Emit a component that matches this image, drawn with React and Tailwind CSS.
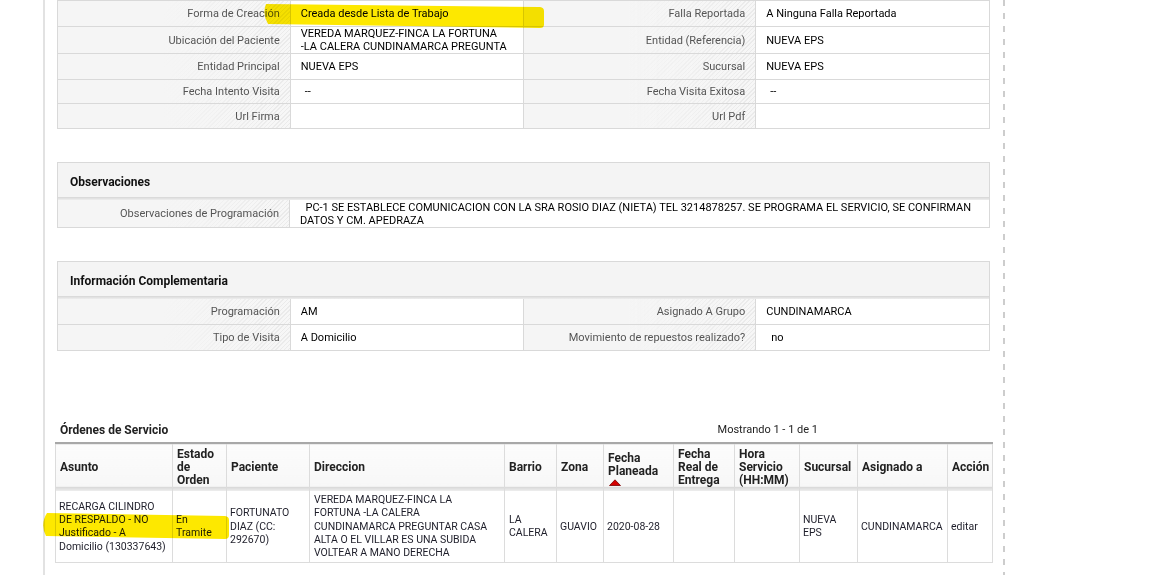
import React from "react";

const labelBg =
  "[background-image:linear-gradient(90deg,#f5f5f5_45%,rgba(245,245,245,0.15)),repeating-linear-gradient(135deg,#e8e8e8_0px,#e8e8e8_1px,#f7f7f7_1px,#f7f7f7_3px)]";

function Label({ children, className = "" }) {
  return (
    <div
      className={`flex items-center justify-end pr-[10px] text-[11px] leading-[13px] text-[#555] bg-[#f5f5f5] ${labelBg} border-r border-[#d9d9d9] ${className}`}
    >
      <span className="text-right">{children}</span>
    </div>
  );
}

function Value({ children, className = "", last = false }) {
  return (
    <div
      className={`flex items-center pl-[10px] pr-[6px] text-[11px] leading-[13px] text-[#000] bg-white ${
        last ? "" : "border-r border-[#d9d9d9]"
      } ${className}`}
    >
      <div>{children}</div>
    </div>
  );
}

function SectionHeader({ title }) {
  return (
    <div>
      <div className="h-[34px] bg-[#f4f4f4] flex items-center pt-[3px] pl-[12px] text-[12px] font-bold text-[#111]">
        {title}
      </div>
      <div className="h-[3px] bg-gradient-to-b from-[#d6d6d6] to-[#eeeeee]" />
    </div>
  );
}

function TopTable() {
  const rows = [
    {
      h: "min-h-[25px]",
      c: [
        "Forma de Creación",
        "Creada desde Lista de Trabajo",
        "Falla Reportada",
        "A Ninguna Falla Reportada",
      ],
    },
    {
      h: "min-h-[25px]",
      c: [
        "Ubicación del Paciente",
        <span className="block whitespace-nowrap overflow-hidden">
          VEREDA MARQUEZ-FINCA LA FORTUNA
          <br />
          -LA CALERA CUNDINAMARCA PREGUNTA
        </span>,
        "Entidad (Referencia)",
        "NUEVA EPS",
      ],
    },
    { h: "min-h-[25px]", c: ["Entidad Principal", "NUEVA EPS", "Sucursal", "NUEVA EPS"] },
    {
      h: "min-h-[23px]",
      c: ["Fecha Intento Visita", "--", "Fecha Visita Exitosa", "--"],
      pad: true,
    },
    { h: "min-h-[24px]", c: ["Url Firma", "", "Url Pdf", ""] },
  ];
  return (
    <div className="border-x border-b border-[#d9d9d9]">
      <div className="grid grid-cols-4 h-[1px] border-b border-[#d9d9d9]">
        <div className={`bg-[#f5f5f5] border-r border-[#d9d9d9]`} />
        <div className="bg-white border-r border-[#d9d9d9]" />
        <div className={`bg-[#f5f5f5] border-r border-[#d9d9d9]`} />
        <div className="bg-white" />
      </div>
      {rows.map((r, i) => (
        <div
          key={i}
          className={`grid grid-cols-4 ${i < rows.length - 1 ? "border-b border-[#d9d9d9]" : ""}`}
        >
          <Label className={r.h}>{r.c[0]}</Label>
          <Value className={`${r.h} ${r.pad ? "pl-[14px]" : ""}`}>{r.c[1]}</Value>
          <Label className={r.h}>{r.c[2]}</Label>
          <Value className={`${r.h} ${r.pad ? "pl-[14px]" : ""}`} last>
            {r.c[3]}
          </Value>
        </div>
      ))}
    </div>
  );
}

function ObsBox() {
  return (
    <div className="mt-[33px] border border-[#d9d9d9]">
      <SectionHeader title="Observaciones" />
      <div className="grid grid-cols-[232px_1fr]">
        <Label className="min-h-[27px]">Observaciones de Programación</Label>
        <Value className="min-h-[27px] pr-[14px]" last>
          {"\u00a0\u00a0PC-1 SE ESTABLECE COMUNICACION CON LA SRA ROSIO DIAZ (NIETA) TEL 3214878257. SE PROGRAMA EL SERVICIO, SE CONFIRMAN DATOS Y CM. APEDRAZA"}
        </Value>
      </div>
    </div>
  );
}

function InfoBox() {
  return (
    <div className="mt-[33px] border border-[#d9d9d9]">
      <SectionHeader title="Información Complementaria" />
      <div className="grid grid-cols-4 border-b border-[#d9d9d9]">
        <Label className="min-h-[25px]">Programación</Label>
        <Value className="min-h-[25px]">AM</Value>
        <Label className="min-h-[25px]">Asignado A Grupo</Label>
        <Value className="min-h-[25px]" last>
          CUNDINAMARCA
        </Value>
      </div>
      <div className="grid grid-cols-4">
        <Label className="min-h-[25px]">Tipo de Visita</Label>
        <Value className="min-h-[25px]">A Domicilio</Value>
        <Label className="min-h-[25px]">Movimiento de repuestos realizado?</Label>
        <Value className="min-h-[25px] pl-[15px]" last>
          no
        </Value>
      </div>
    </div>
  );
}

const thBg =
  "bg-[linear-gradient(to_bottom,#fcfcfc_0%,#f7f7f7_90%,#d8d8d8_92%,#eeeeee_100%)]";

function Th({ children }) {
  return (
    <th
      className={`h-[48px] align-middle text-left pl-[4px] pr-[2px] text-[12px] leading-[13px] font-bold text-[#222] border-x border-[#dcdcdc] ${thBg}`}
    >
      {children}
    </th>
  );
}

function Td({ children, className = "" }) {
  return (
    <td
      className={`h-[71px] align-middle text-left pl-[3px] pr-[4px] text-[10.5px] leading-[13.3px] text-[#1e1e2a] border-x border-b border-[#dcdcdc] ${className}`}
    >
      {children}
    </td>
  );
}

function Orders() {
  const widths = [
    "w-[117px]",
    "w-[54px]",
    "w-[83px]",
    "w-[195px]",
    "w-[52px]",
    "w-[47px]",
    "w-[70px]",
    "w-[61px]",
    "w-[65px]",
    "w-[58px]",
    "w-[90px]",
    "w-[45px]",
  ];
  return (
    <div className="-mx-[2px]">
      <div className="mt-[72px] flex items-center h-[14px]">
        <div className="flex-1 pl-[5px] text-[12px] font-bold text-[#222] leading-[14px]">
          Órdenes de Servicio
        </div>
        <div className="mr-[174px] text-[11px] text-[#222] leading-[14px]">
          Mostrando 1 - 1 de 1
        </div>
      </div>
      <table className="mt-[5px] table-fixed border-collapse w-[937px] border-t-2 border-[#a8a8a8]">
        <colgroup>
          {widths.map((w, i) => (
            <col key={i} className={w} />
          ))}
        </colgroup>
        <thead>
          <tr>
            <Th>Asunto</Th>
            <Th>
              Estado
              <br />
              de
              <br />
              Orden
            </Th>
            <Th>Paciente</Th>
            <Th>Direccion</Th>
            <Th>Barrio</Th>
            <Th>Zona</Th>
            <Th>
              <div className="pt-[2px]">
                Fecha
                <br />
                Planeada
                <svg width="12" height="7" viewBox="0 0 12 7" className="block mt-[1px] ml-[1px]">
                  <polygon points="0.5,6.5 6,0.8 11.5,6.5" fill="#d40000" stroke="#7a0000" strokeWidth="0.8" />
                </svg>
              </div>
            </Th>
            <Th>
              Fecha
              <br />
              Real de
              <br />
              Entrega
            </Th>
            <Th>
              Hora
              <br />
              Servicio
              <br />
              (HH:MM)
            </Th>
            <Th>Sucursal</Th>
            <Th>Asignado a</Th>
            <Th>Acción</Th>
          </tr>
        </thead>
        <tbody>
          <tr>
            <Td>RECARGA CILINDRO DE RESPALDO - NO Justificado - A Domicilio (130337643)</Td>
            <Td>En Tramite</Td>
            <Td>FORTUNATO DIAZ (CC: 292670)</Td>
            <Td className="pl-[4px] pr-[6px]">
              VEREDA MARQUEZ-FINCA LA FORTUNA -LA CALERA CUNDINAMARCA PREGUNTAR CASA ALTA O EL
              VILLAR ES UNA SUBIDA VOLTEAR A MANO DERECHA
            </Td>
            <Td className="pl-[4px]">LA CALERA</Td>
            <Td className="pr-0">GUAVIO</Td>
            <Td>2020-08-28</Td>
            <Td></Td>
            <Td></Td>
            <Td>NUEVA EPS</Td>
            <Td className="pr-0 whitespace-nowrap">CUNDINAMARCA</Td>
            <Td>editar</Td>
          </tr>
        </tbody>
      </table>
    </div>
  );
}

export default function App() {
  return (
    <div className="relative w-[1172px] h-[575px] overflow-hidden bg-white font-['Roboto','Liberation_Sans',sans-serif]">
      <div className="flex h-full">
        <div className="w-[43px] shrink-0" />
        <div className="w-[2px] shrink-0 bg-[#e2e2e2]" />
        <main className="w-[958px] shrink-0 pl-[12px] pr-[13px]">
          <TopTable />
          <ObsBox />
          <InfoBox />
          <Orders />
        </main>
        <div className="w-[2px] shrink-0 bg-[repeating-linear-gradient(to_bottom,#cdcdcd_0px,#cdcdcd_6px,transparent_6px,transparent_13px)]" />
      </div>
      <svg
        className="absolute inset-0 pointer-events-none mix-blend-multiply"
        width="1172"
        height="575"
        viewBox="0 0 1172 575"
      >
        <path
          d="M266,4 L540,7 Q544,7.5 544,11 L544,24.5 Q544,28 540,28 L268,24 Q262,14 266,4 Z"
          fill="#fde800"
        />
        <path
          d="M47,513 L225,516 Q229,516.5 229,520 L229,535 Q229,539 225,539 L46,536 Q40,524 47,513 Z"
          fill="#fde800"
        />
      </svg>
    </div>
  );
}
